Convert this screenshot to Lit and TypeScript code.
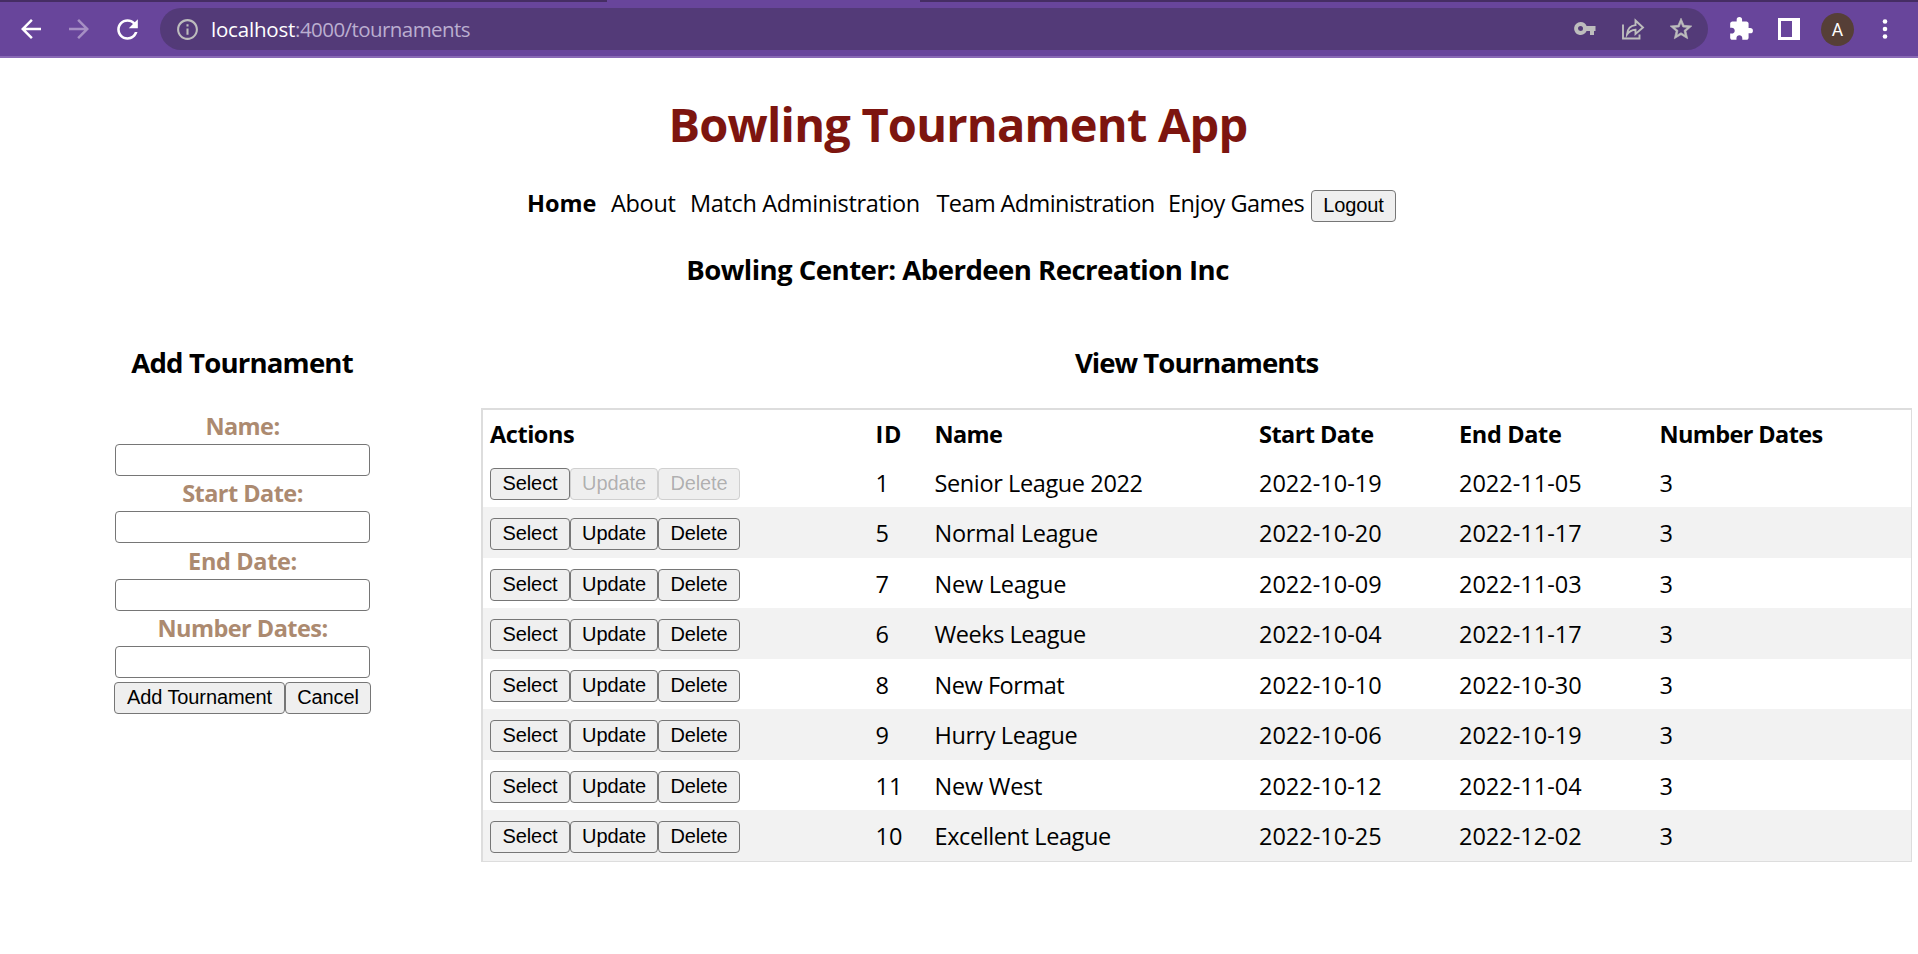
import { LitElement, html, css } from "lit";
import { customElement } from "lit/decorators.js";
import { styleMap } from "lit/directives/style-map.js";

interface Tournament {
  id: number;
  name: string;
  start: string;
  end: string;
  dates: number;
  tracking: number;
  locked?: boolean;
}

const TOURNAMENTS: Tournament[] = [
  { id: 1, name: "Senior League 2022", start: "2022-10-19", end: "2022-11-05", dates: 3, tracking: -0.387, locked: true },
  { id: 5, name: "Normal League", start: "2022-10-20", end: "2022-11-17", dates: 3, tracking: -0.3 },
  { id: 7, name: "New League", start: "2022-10-09", end: "2022-11-03", dates: 3, tracking: -0.25 },
  { id: 6, name: "Weeks League", start: "2022-10-04", end: "2022-11-17", dates: 3, tracking: -0.45 },
  { id: 8, name: "New Format", start: "2022-10-10", end: "2022-10-30", dates: 3, tracking: -0.45 },
  { id: 9, name: "Hurry League", start: "2022-10-06", end: "2022-10-19", dates: 3, tracking: -0.42 },
  { id: 11, name: "New West", start: "2022-10-12", end: "2022-11-04", dates: 3, tracking: -0.25 },
  { id: 10, name: "Excellent League", start: "2022-10-25", end: "2022-12-02", dates: 3, tracking: -0.4 },
];

const COLUMNS: [string, number][] = [
  ["Actions", -0.45],
  ["ID", 0.8],
  ["Name", -0.6],
  ["Start Date", -0.55],
  ["End Date", -0.35],
  ["Number Dates", -0.62],
];

const NAV: [string, number][] = [
  ["About", -0.322],
  ["Match Administration", -0.34],
  ["Team Administration", -0.6],
  ["Enjoy Games", -0.501],
];

const FIELDS: [string, number][] = [
  ["Name:", -0.565],
  ["Start Date:", -0.549],
  ["End Date:", -0.345],
  ["Number Dates:", -0.543],
];

const spacing = (value: number) => styleMap({ letterSpacing: `${value}px` });

@customElement("browser-bar")
export class BrowserBar extends LitElement {
  static styles = css`
    :host {
      display: block;
      height: 58px;
      box-sizing: border-box;
      background: #68459b;
      border-bottom: 2px solid #8969b5;
      color: #fff;
      font-family: "Open Sans", sans-serif;
    }
    .tabs {
      display: flex;
      justify-content: space-between;
      height: 2px;
    }
    .tab-left, .tab-right { background: #452d63; }
    .tab-left { width: 607px; }
    .tab-right { width: 998px; }
    .tools {
      display: flex;
      align-items: center;
      height: 54px;
    }
    svg { display: block; flex: none; fill: currentColor; }
    .back { margin-left: 16px; }
    .forward { margin-left: 18px; color: #a68fc4; }
    .reload { margin-left: 18px; }
    .address {
      display: flex;
      align-items: center;
      box-sizing: border-box;
      width: 1548px;
      height: 42px;
      margin-left: 17px;
      padding-left: 15px;
      border-radius: 21px;
      background: #533a78;
      color: #bdbdbd;
    }
    .url {
      flex: 1;
      margin-left: 11px;
      font-size: 20.5px;
      line-height: 28px;
      letter-spacing: -0.56px;
      color: #bbaed0;
      white-space: nowrap;
    }
    .host { color: #fff; letter-spacing: -0.2px; }
    .share { margin-left: 24px; }
    .star { margin: 0 14px 0 23px; stroke: currentColor; stroke-width: 0.6; }
    .puzzle { margin-left: 20px; }
    .panel { margin-left: 24px; }
    .avatar {
      width: 33px;
      height: 33px;
      margin: 1px 0 0 21px;
      border-radius: 50%;
      background: #563f37;
      font: 17.5px/34px Roboto, sans-serif;
      text-align: center;
    }
    .dots { margin-left: 28px; }
  `;

  render() {
    return html`
      <div class="tabs"><div class="tab-left"></div><div class="tab-right"></div></div>
      <div class="tools">
        <svg class="back" width="30" height="30" viewBox="0 0 24 24"><path d="M20 11H7.830l5.590-5.590L12 4l-8 8 8 8 1.410-1.410L7.830 13H20z"/></svg>
        <svg class="forward" width="30" height="30" viewBox="0 0 24 24"><path d="M12 4l-1.410 1.410L16.170 11H4v2h12.170l-5.580 5.590L12 20l8-8z"/></svg>
        <svg class="reload" width="31" height="31" viewBox="0 0 24 24"><path d="M17.650 6.350C16.200 4.900 14.210 4 12 4c-4.420 0-7.990 3.580-7.990 8s3.570 8 7.990 8c3.730 0 6.840-2.550 7.730-6h-2.080c-.82 2.330-3.040 4-5.650 4-3.310 0-6-2.690-6-6s2.690-6 6-6c1.660 0 3.140.69 4.220 1.780L13 11h7V4z"/></svg>
        <div class="address">
          <svg width="25" height="25" viewBox="0 0 24 24"><path d="M11 7h2v2h-2zm0 4h2v6h-2zm1-9C6.480 2 2 6.480 2 12s4.480 10 10 10 10-4.480 10-10S17.520 2 12 2zm0 18c-4.410 0-8-3.590-8-8s3.590-8 8-8 8 3.590 8 8-3.590 8-8 8z"/></svg>
          <div class="url"><span class="host">localhost</span>:4000/tournaments</div>
          <svg width="24" height="24" viewBox="0 0 24 24"><path fill-rule="evenodd" d="M7.500 5a6.500 6.500 0 1 0 6.100 9H17v4h4v-4h1.500V9H13.600A6.500 6.500 0 0 0 7.500 5zM7.500 9a2.500 2.500 0 1 1 0 5 2.500 2.500 0 0 1 0-5z"/></svg>
          <svg class="share" width="24" height="24" viewBox="0 0 24 24"><path d="M2 7.500V21.500H18.500V17.500M6 17.500C6.400 11.500 9.500 8.500 14.500 8.100V3.500L22 10.500L14.500 17V12.700C10.500 12.800 8 14.500 6 17.500Z" fill="none" stroke="currentColor" stroke-width="1.900"/></svg>
          <svg class="star" width="26" height="26" viewBox="0 0 24 24"><path d="M22 9.240l-7.190-.62L12 2 9.190 8.630 2 9.240l5.460 4.730L5.820 21 12 17.270 18.180 21l-1.630-7.030zM12 15.400l-3.760 2.270 1-4.280-3.320-2.880 4.380-.38L12 6.100l1.710 4.040 4.380.38-3.320 2.880 1 4.280z"/></svg>
        </div>
        <svg class="puzzle" width="26" height="26" viewBox="0 0 24 24"><path d="M20.500 11H19V7c0-1.100-.9-2-2-2h-4V3.500a2.500 2.500 0 0 0-5 0V5H4c-1.100 0-1.990.9-1.990 2v3.800H3.500c1.490 0 2.700 1.210 2.700 2.700s-1.210 2.700-2.700 2.700H2V20c0 1.100.9 2 2 2h3.800v-1.500c0-1.490 1.210-2.700 2.700-2.700s2.700 1.210 2.700 2.700V22H17c1.100 0 2-.9 2-2v-4h1.500a2.500 2.500 0 0 0 0-5z"/></svg>
        <svg class="panel" width="22" height="22" viewBox="0 0 22 22"><path fill-rule="evenodd" d="M0 0H22V22H0zM3 3V19H14V3z"/></svg>
        <div class="avatar">A</div>
        <svg class="dots" width="6" height="22" viewBox="0 0 6 22"><circle cx="3" cy="3.500" r="2.300"/><circle cx="3" cy="11" r="2.300"/><circle cx="3" cy="18.500" r="2.300"/></svg>
      </div>
    `;
  }
}

@customElement("app-root")
export class AppRoot extends LitElement {
  static styles = css`
    :host {
      display: block;
      width: 1918px;
      height: 954px;
      overflow: hidden;
      background: #fff;
      color: #000;
      font: 23.5px/32px "Open Sans", sans-serif;
      white-space: nowrap;
    }
    h1, h3 { margin: 0; text-align: center; font-weight: 700; }
    h1 {
      padding: 33px 2px 0 0;
      font-size: 47px;
      line-height: 66px;
      letter-spacing: -0.79px;
      color: #7d150f;
    }
    h3 { font-size: 27.6px; line-height: 36px; }
    nav {
      display: grid;
      grid-template-columns: 84px 79px 246.5px 231.5px 143px 85px;
      margin-top: 30px;
      padding-left: 527px;
    }
    .current { font-weight: 700; }
    .center-name { margin-top: 29px; padding-right: 3px; letter-spacing: -0.548px; }
    button {
      box-sizing: border-box;
      height: 32px;
      margin: 0;
      padding: 0 0 2px;
      border: 1px solid #767676;
      border-radius: 4px;
      background: #efefef;
      color: #000;
      font: 20px/28px "Liberation Sans", sans-serif;
      letter-spacing: -0.1px;
    }
    button:disabled { color: rgba(16, 16, 16, 0.3); border-color: #d0d0d0; }
    .logout { margin-top: 3px; }
    main { display: flex; margin-top: 57px; }
    .add { width: 481px; }
    .add h3 { letter-spacing: -0.823px; padding-left: 3px; }
    form {
      display: flex;
      flex-direction: column;
      width: 257px;
      margin: 30px 0 0 114px;
    }
    .field {
      display: flex;
      flex-direction: column;
      align-items: center;
      height: 67.33px;
    }
    label { padding-top: 1px; line-height: 30px; font-weight: 700; color: #ac8a70; }
    input {
      box-sizing: border-box;
      width: 255px;
      height: 32px;
      margin: 3px 0 0;
      border: 1px solid #767676;
      border-radius: 4px;
      background: #fff;
    }
    .buttons { display: flex; margin-top: 3px; }
    .submit { width: 171px; }
    .cancel { width: 86px; }
    .view { width: 1431px; }
    .view h3 { letter-spacing: -0.999px; }
    .table {
      box-sizing: border-box;
      height: 454px;
      margin-top: 28px;
      border: solid #ddd;
      border-width: 2px 1px 1px 2px;
    }
    .row {
      display: grid;
      grid-template-columns: 385.5px 59px 324.5px 200px 200.5px 1fr;
      box-sizing: border-box;
      height: 50.57px;
      padding: 11px 0 0 7px;
    }
    .row:nth-child(odd):not(.head) { background: #f2f2f2; }
    .head { height: 46.5px; padding-top: 8px; font-weight: 700; }
    .cell { line-height: 31px; }
    .actions { display: flex; }
    .select { width: 80px; }
    .update { width: 88px; }
    .delete { width: 82px; }
  `;

  render() {
    return html`
      <browser-bar></browser-bar>
      <h1>Bowling Tournament App</h1>
      <nav>
        <span class="current">Home</span>
        ${NAV.map(([label, tracking]) => html`<span style=${spacing(tracking)}>${label}</span>`)}
        <button class="logout">Logout</button>
      </nav>
      <h3 class="center-name">Bowling Center: Aberdeen Recreation Inc</h3>
      <main>
        <section class="add">
          <h3>Add Tournament</h3>
          <form @submit=${(e: Event) => e.preventDefault()}>
            ${FIELDS.map(([label, tracking]) => html`
              <div class="field">
                <label style=${spacing(tracking)}>${label}</label>
                <input type="text" aria-label=${label} />
              </div>`)}
            <div class="buttons">
              <button class="submit">Add Tournament</button>
              <button class="cancel" type="button">Cancel</button>
            </div>
          </form>
        </section>
        <section class="view">
          <h3>View Tournaments</h3>
          <div class="table">
            <div class="row head">
              ${COLUMNS.map(([label, tracking]) => html`<span style=${spacing(tracking)}>${label}</span>`)}
            </div>
            ${TOURNAMENTS.map((t) => html`
              <div class="row">
                <div class="actions">
                  <button class="select">Select</button>
                  <button class="update" ?disabled=${t.locked}>Update</button>
                  <button class="delete" ?disabled=${t.locked}>Delete</button>
                </div>
                <span class="cell">${t.id}</span>
                <span class="cell" style=${spacing(t.tracking)}>${t.name}</span>
                <span class="cell">${t.start}</span>
                <span class="cell">${t.end}</span>
                <span class="cell">${t.dates}</span>
              </div>`)}
          </div>
        </section>
      </main>
    `;
  }
}
